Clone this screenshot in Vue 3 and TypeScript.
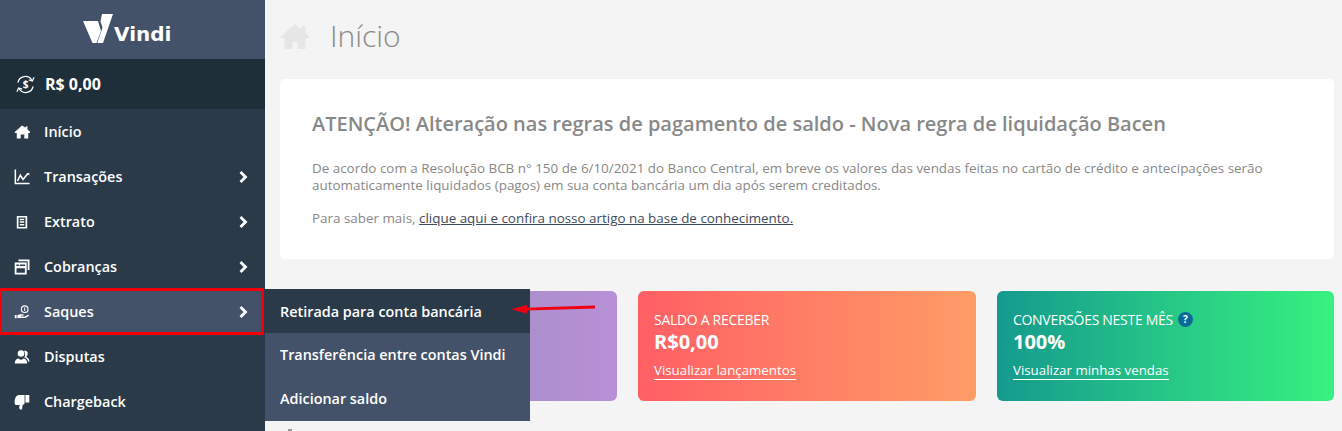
<script setup lang="ts">
interface MenuItem {
  label: string
  icon: string
  arrow: boolean
}

const menu: MenuItem[] = [
  { label: 'Início', icon: 'home', arrow: false },
  { label: 'Transações', icon: 'chart', arrow: true },
  { label: 'Extrato', icon: 'doc', arrow: true },
  { label: 'Cobranças', icon: 'bills', arrow: true },
  { label: 'Saques', icon: 'hand', arrow: true },
  { label: 'Disputas', icon: 'users', arrow: false },
  { label: 'Chargeback', icon: 'thumb', arrow: false }
]

const submenu = ['Retirada para conta bancária', 'Transferência entre contas Vindi', 'Adicionar saldo']
</script>

<template>
  <div class="page">
    <aside class="sidebar">
      <div class="logo">
        <svg class="logo-mark" width="30" height="29" viewBox="0 0 30 29">
          <path d="M0 7h15l3 10-4.500 12H9.500z" fill="#fff" />
          <path d="M19 0h11L20 29h-5.700l5.200-15.500-2-6z" fill="#fff" />
        </svg>
        <span class="logo-text">Vindi</span>
      </div>
      <div class="balance">
        <svg width="21" height="21" viewBox="0 0 22 22" fill="none" stroke="#fff" stroke-width="1.300">
          <path d="M3 9a8 8 0 0 1 14.700-2.500M19 13a8 8 0 0 1-14.700 2.500" />
          <path d="M20 3.500l-1.800 3.800-3.800-1.200M2 18.500l1.800-3.800 3.800 1.200" />
          <text x="11" y="15" text-anchor="middle" font-size="10.500" font-weight="700" fill="#fff" stroke="none" font-family="Open Sans, sans-serif">$</text>
        </svg>
        <span>R$ 0,00</span>
      </div>
      <nav class="menu">
        <div v-for="item in menu" :key="item.label" class="menu-item" :class="{ selected: item.label === 'Saques' }">
          <svg class="menu-icon" width="16" height="16" viewBox="0 0 16 16" fill="#fff">
            <path v-if="item.icon === 'home'" d="M8 1.500 .5 8.300l.7.700h1.600v5.500h3.900v-4h3.600v4h3.900V9h1.600l.7-.7-3-2.800V2.500h-2v1.200z" />
            <g v-else-if="item.icon === 'chart'">
              <path d="M.6 .5h1.500v13.300H15.500v1.500H.6z" />
              <path d="M3.500 12 6.300 6.200 9 10.500 13.700 4.800" fill="none" stroke="#fff" stroke-width="1.600" />
              <path d="M12.500 4h2.800v2.800z" />
            </g>
            <path v-else-if="item.icon === 'doc'" fill-rule="evenodd" d="M2.800 2h10.400v12.500H2.800zM4.500 3.500v9.500h7V3.500zM5.800 4.700h4.400v1.500H5.800zM5.800 7.300h4.400v1.500H5.800zM5.800 9.900h4.400v1.500H5.800z" />
            <path v-else-if="item.icon === 'bills'" fill-rule="evenodd" d="M4.500 .5h11v10.500h-1.800V2.300H4.500zM.7 3.500h12v12h-12zM2.300 5.400v1.500h2.500V5.400zM5.800 5.400v1.500h5.300V5.400zM2.500 9.200v4.500h8.400V9.200z" />
            <g v-else-if="item.icon === 'hand'">
              <path d="M.8 11h1.800v3.300H.8zM3.400 11.200l2.200-1h3.100c.7 0 1 .3 1 .8s-.3.8-1 .8H7v.7h3.600l3.200-1.600c.8-.4 1.500.3.900 1l-3.100 2.100H3.400z" />
              <circle cx="10.700" cy="5.200" r="3.300" fill="none" stroke="#fff" stroke-width="1.100" />
              <path d="M10.200 3.400h1v3.600h-1z" />
            </g>
            <g v-else-if="item.icon === 'users'">
              <circle cx="7" cy="4.500" r="3.300" />
              <path d="M.8 14.500c0-3.300 1.400-4.600 3.500-5l2.700 1.500 2.700-1.500c2.100.4 3.500 1.700 3.500 5z" />
              <path d="M10.500 1.800c2.300-.3 3.500 1.300 3.200 3.200-.1 1.200-.6 2-1.300 2.800l.5.800c1.500.6 2.600 2 2.500 4.200h-1.300c-.4-2-1.400-3.700-3.800-4.300 1.100-1.700 1.200-4.400-.3-6.700z" />
            </g>
            <path v-else d="M.6 7.700C.6 4.800 2.200 1 4.800 1h5.800v8.400l-2 1.900-.5 3.500c-.2 1.200-2.300 1.200-2.800-.2-.3-1.100.1-2.500.5-3.600H2C1 11 .6 9.900 .6 7.700zM11.400 1h3.900v7.500h-3.900z" />
          </svg>
          <span class="menu-label">{{ item.label }}</span>
          <svg v-if="item.arrow" class="chevron" width="9" height="12" viewBox="0 0 9 12" fill="none" stroke="#fff" stroke-width="2.800">
            <path d="M1.500 1 6.500 6l-5 5" />
          </svg>
        </div>
      </nav>
    </aside>

    <main class="content">
      <header class="page-title">
        <svg width="30" height="25" viewBox="0 0 30 25" fill="#e6e6e6">
          <path d="M15 0 0 13l1 1h3.500v11h8v-7h5v7h8V14H29l1-1-4.500-4V2h-4v3.500z" />
        </svg>
        <h1>Início</h1>
      </header>

      <section class="notice">
        <h2>ATENÇÃO! Alteração nas regras de pagamento de saldo - Nova regra de liquidação Bacen</h2>
        <p>De acordo com a Resolução BCB n° 150 de 6/10/2021 do Banco Central, em breve os valores das vendas feitas no cartão de crédito e antecipações serão automaticamente liquidados (pagos) em sua conta bancária um dia após serem creditados.</p>
        <p>Para saber mais, <a>clique aqui e confira nosso artigo na base de conhecimento.</a></p>
      </section>

      <section class="cards">
        <div class="card purple"></div>
        <div class="card red">
          <div class="card-title">SALDO A RECEBER</div>
          <div class="card-value">R$0,00</div>
          <a class="card-link">Visualizar lançamentos</a>
        </div>
        <div class="card green">
          <div class="card-title">CONVERSÕES NESTE MÊS <span class="help">?</span></div>
          <div class="card-value">100%</div>
          <a class="card-link">Visualizar minhas vendas</a>
        </div>
      </section>

      <div class="next-section"></div>
    </main>

    <!-- flyout of Saques, lies over the first card -->
    <div class="flyout">
      <div v-for="(label, i) in submenu" :key="label" class="flyout-item" :class="{ current: i === 0 }">{{ label }}</div>
    </div>

    <svg class="pointer" width="84" height="10" viewBox="0 0 84 10">
      <path d="M14 3.800 84 1.500V4.500L14 6.500z" fill="#f00010" />
      <path d="M0 5.200 16 1V9.500z" fill="#f00010" />
    </svg>
  </div>
</template>

<style scoped>
.page {
  position: relative;
  display: flex;
  width: 1342px;
  height: 431px;
  overflow: hidden;
  background: #f4f4f4;
  font-family: "Open Sans", sans-serif;
}

.sidebar {
  width: 265px;
  flex: none;
  background: #2a3a49;
  color: #fff;
}

.logo {
  height: 59px;
  display: flex;
  align-items: flex-start;
  padding: 14px 0 0 83px;
  box-sizing: border-box;
  background: #435268;
}

.logo-text {
  margin: 9px 0 0 1px;
  font-family: "DejaVu Sans", sans-serif;
  font-size: 20px;
  line-height: 23px;
  font-weight: 700;
}

.balance {
  height: 50px;
  display: flex;
  align-items: center;
  gap: 9px;
  padding-left: 15px;
  background: #1f2f3a;
  font-size: 16px;
  font-weight: 700;
}

.menu-item {
  height: 45px;
  display: flex;
  align-items: center;
  padding: 0 17px 0 14px;
  box-sizing: border-box;
  font-size: 14.400px;
  font-weight: 600;
}

.menu-item.selected {
  margin-right: 2px;
  padding-right: 15px;
  background: #435268;
  outline: 3px solid #f5000a;
  outline-offset: -2px;
}

.menu-icon {
  flex: none;
  margin-right: 14px;
}

.menu-label {
  flex: 1;
}

.content {
  flex: 1;
  min-width: 0;
  padding: 0 8px 0 15px;
}

.page-title {
  height: 79px;
  padding-bottom: 7px;
  box-sizing: border-box;
  display: flex;
  align-items: center;
  gap: 20px;
  color: #8a8a8a;
}

.page-title h1 {
  margin: -2px 0 0;
  font-size: 30px;
  font-weight: 300;
}

.notice {
  height: 180px;
  box-sizing: border-box;
  padding: 32px 32px 0;
  background: #fff;
  border-radius: 5px;
  color: #888;
}

.notice h2 {
  margin: 0 0 23px;
  font-size: 20px;
  line-height: 26px;
  font-weight: 600;
}

.notice p {
  margin: 0 0 16px;
  font-size: 13.420px;
  line-height: 17px;
}

.notice a {
  color: #3d4a5a;
  text-decoration: underline;
}

.cards {
  display: grid;
  grid-template-columns: 338px 338px 337px;
  column-gap: 21px;
  margin: 32px 0 0 -1px;
}

.card {
  height: 110px;
  box-sizing: border-box;
  padding: 19px 16px 0;
  border-radius: 6px;
  color: #fff;
}

.purple {
  background: linear-gradient(to right, #8d8ab5, #b890d6);
}

.red {
  background: linear-gradient(to right, #ff5f65, #ff9d66);
}

.green {
  padding-top: 18px;
  background: linear-gradient(to right, #149a8e, #38f27f);
}

.card-title {
  display: flex;
  align-items: center;
  gap: 5px;
  font-size: 14px;
  line-height: 20px;
  letter-spacing: -0.3px;
}

.green .card-title {
  line-height: 21px;
}

.help {
  width: 15px;
  height: 15px;
  border-radius: 50%;
  background: #0b6b96;
  font-size: 10px;
  line-height: 15px;
  font-weight: 700;
  text-align: center;
  letter-spacing: 0;
}

.card-value {
  font-size: 20px;
  line-height: 24px;
  font-weight: 700;
}

.card-link {
  display: inline-block;
  margin-top: 7px;
  font-size: 13.300px;
  line-height: 18px;
  border-bottom: 1px solid #fff;
}

/* top of the block under the cards, cut off by the window */
.next-section {
  width: 4px;
  height: 4px;
  margin: 28px 0 0 8px;
  background: #a09a90;
}

.flyout {
  position: absolute;
  left: 265px;
  top: 289px;
  width: 265px;
  background: #435268;
  color: #fff;
}

.flyout-item {
  height: 44px;
  padding-bottom: 2px;
  box-sizing: border-box;
  display: flex;
  align-items: center;
  padding-left: 15px;
  font-size: 14.400px;
  font-weight: 600;
}

.flyout-item.current {
  padding-bottom: 0;
  background: #2a3a49;
}

.pointer {
  position: absolute;
  left: 511px;
  top: 304px;
}
</style>
